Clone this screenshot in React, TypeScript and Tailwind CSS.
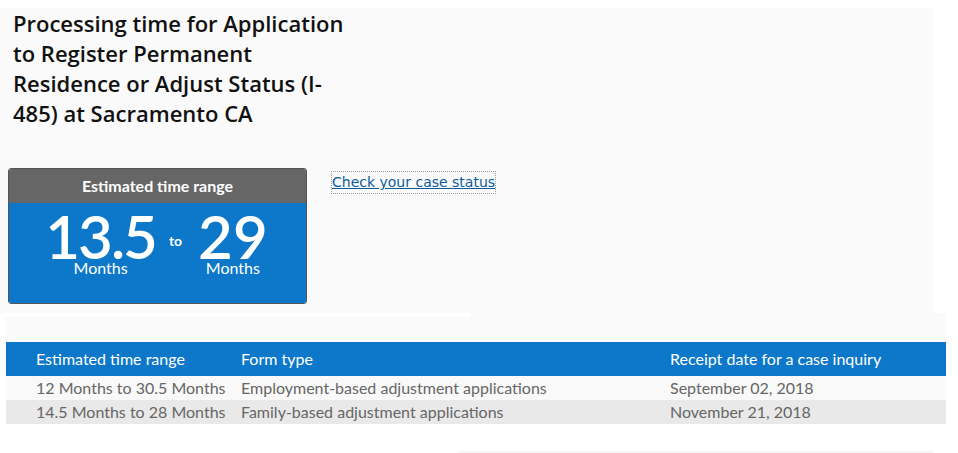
import React from "react";

const rows = [
  ["12 Months to 30.5 Months", "Employment-based adjustment applications", "September 02, 2018"],
  ["14.5 Months to 28 Months", "Family-based adjustment applications", "November 21, 2018"],
];

export default function App() {
  return (
    <div className="relative w-[958px] h-[453px] bg-white overflow-hidden" style={{ fontFamily: "Lato, 'Liberation Sans', sans-serif" }}>
      <div className="mt-[8px] w-[933px] h-[305px] bg-[#fafafa]">
        <h1 className="pl-[13px] text-[22px] leading-[30px] font-semibold text-[#111]" style={{ fontFamily: "'Open Sans', sans-serif" }}>
          <span className="block">Processing time for Application</span>
          <span className="block">to Register Permanent</span>
          <span className="block">Residence or Adjust Status (I-</span>
          <span className="block">485) at Sacramento CA</span>
        </h1>
        <div className="mt-[40px] flex items-start">
          <div className="ml-[8px] w-[299px] h-[136px] rounded-[3px] border border-[#555] overflow-hidden flex flex-col">
            <div className="h-[34px] bg-[#666666] text-white text-[16px] font-bold flex items-center justify-center">Estimated time range</div>
            <div className="flex-1 bg-[#0d78c9] text-white flex justify-center pt-[10px] pr-[2px]">
              <div className="flex flex-col items-center">
                <span className="text-[60px] leading-[46px] font-semibold tracking-[-2px]">13.5</span>
                <span className="text-[16px] leading-[18px]">Months</span>
              </div>
              <span className="ml-[13px] mr-[16px] mt-[20px] text-[14px] leading-[16px] font-bold">to</span>
              <div className="flex flex-col items-center">
                <span className="text-[60px] leading-[46px] font-semibold">29</span>
                <span className="text-[16px] leading-[18px]">Months</span>
              </div>
            </div>
          </div>
          <a href="#" className="ml-[25px] mt-[4px] text-[14px] text-[#0a5c9e] underline outline-1 outline-dotted outline-[#999]" style={{ fontFamily: "'DejaVu Sans', sans-serif" }}>Check your case status</a>
        </div>
      </div>
      <div className="ml-[6px] w-[940px] bg-[#fafafa] text-[16px]">
        <div className="-ml-[6px] w-[470px] h-[4px] bg-white" />
        <div className="h-[25px]" />
        <div className="grid grid-cols-[205px_429px_1fr] pl-[30px] h-[34px] items-center bg-[#0d78c9] text-white">
          <span>Estimated time range</span>
          <span>Form type</span>
          <span>Receipt date for a case inquiry</span>
        </div>
        {rows.map((r, i) => (
          <div key={i} className={`grid grid-cols-[205px_429px_1fr] pl-[30px] h-[24px] items-center text-[#666] ${i === 0 ? "bg-[#f9f9f9]" : "bg-[#e9e9e9]"}`}>
            <span>{r[0]}</span>
            <span>{r[1]}</span>
            <span>{r[2]}</span>
          </div>
        ))}
      </div>
      <div className="mt-[27px] ml-[458px] w-[475px] h-[2px] bg-[#f6f6f6]" />
    </div>
  );
}
